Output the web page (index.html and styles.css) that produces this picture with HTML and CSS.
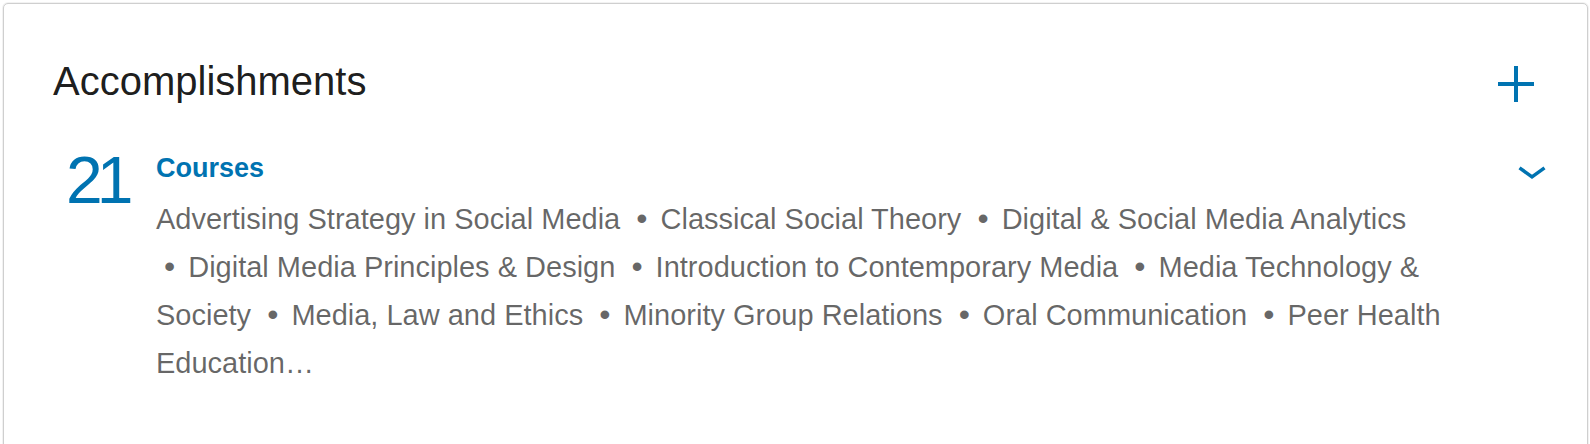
FILE: index.html
```html
<!DOCTYPE html>
<html lang="en">
<head>
<meta charset="utf-8">
<title>Accomplishments</title>
<link rel="stylesheet" href="styles.css">
</head>
<body>
<section class="card">
  <header class="card-header">
    <h2 class="card-title">Accomplishments</h2>
    <button class="icon-btn add-btn" aria-label="Add accomplishment">
      <svg class="plus" width="36" height="36" viewBox="0 0 36 36" aria-hidden="true">
        <path d="M18 0V36M0 18H36" />
      </svg>
    </button>
  </header>
  <div class="accomplishment">
    <div class="count">21</div>
    <div class="details">
      <h3 class="category">Courses</h3>
      <ul class="course-list">
        <li class="course">Advertising Strategy in Social Media</li>
        <li class="course">Classical Social Theory</li>
        <li class="course">Digital &amp; Social Media Analytics</li>
        <li class="course">Digital Media Principles &amp; Design</li>
        <li class="course">Introduction to Contemporary Media</li>
        <li class="course">Media Technology &amp; Society</li>
        <li class="course">Media, Law and Ethics</li>
        <li class="course">Minority Group Relations</li>
        <li class="course">Oral Communication</li>
        <li class="course">Peer Health Education…</li>
      </ul>
    </div>
    <button class="icon-btn expand-btn" aria-label="Expand courses">
      <svg class="chevron" width="28" height="13" viewBox="0 0 28 13" aria-hidden="true">
        <polyline points="1.5,1.8 14,10.8 26.5,1.8" />
      </svg>
    </button>
  </div>
</section>
</body>
</html>
```

FILE: styles.css
```css
html, body {
  margin: 0;
  padding: 0;
  background: #ffffff;
  overflow: hidden;
}

body {
  font-family: "Liberation Sans", Arial, sans-serif;
  color: rgba(0, 0, 0, 0.9);
}

.card {
  margin: 3px 2px 0 3px;
  padding: 53px 41px 90px 49px;
  border: 1px solid #cfcfcf;
  border-radius: 5px;
  box-shadow: 0 0 0 1px rgba(0, 0, 0, 0.05);
  background: #fff;
}

.card-header {
  display: flex;
  justify-content: space-between;
  align-items: flex-start;
  margin-bottom: 47px;
}

.card-title {
  margin: 0;
  font-size: 40px;
  line-height: 48px;
  font-weight: 400;
  color: rgba(0, 0, 0, 0.9);
}

.icon-btn {
  border: 0;
  padding: 0;
  margin: 0;
  background: none;
  display: block;
  cursor: pointer;
  line-height: 0;
}

.add-btn {
  margin-top: 9px;
  margin-right: 12px;
}

.plus path {
  stroke: #0073b1;
  stroke-width: 4;
  fill: none;
}

.accomplishment {
  display: flex;
  align-items: flex-start;
  padding-left: 13px;
}

.count {
  flex: none;
  width: 90px;
  font-size: 66px;
  line-height: 56px;
  letter-spacing: -6px;
  color: #0073b1;
}

.details {
  flex: 1;
  min-width: 0;
  margin-right: 48px;
}

.category {
  margin: 0;
  font-size: 27px;
  line-height: 32px;
  font-weight: 700;
  color: #0073b1;
}

.course-list {
  list-style: none;
  margin: 11px 0 0;
  padding: 0;
  font-size: 29px;
  line-height: 48px;
  color: rgba(0, 0, 0, 0.6);
}

.course {
  display: inline;
}

.course + .course::before {
  content: "\2022";
  margin: 0 13px 0 8px;
  font-size: 32px;
  line-height: 1;
}

.expand-btn {
  flex: none;
  margin-top: 14px;
}

.chevron polyline {
  fill: none;
  stroke: #0073b1;
  stroke-width: 3.5;
  stroke-linejoin: miter;
}
```
